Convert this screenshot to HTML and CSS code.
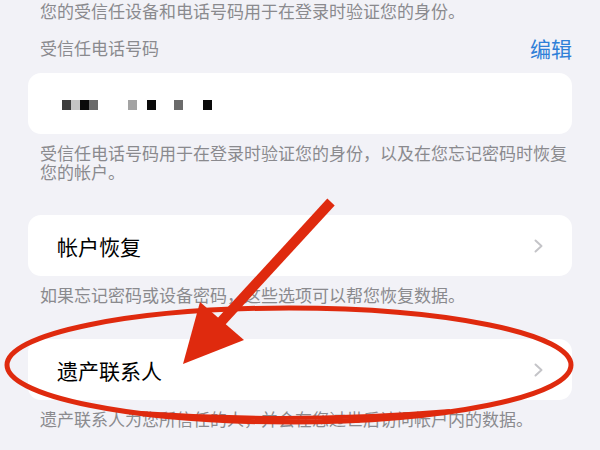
FILE: index.html
```html
<!DOCTYPE html>
<html lang="zh-CN">
<head>
<meta charset="UTF-8"/>
<meta name="viewport" content="width=device-width, initial-scale=1.0"/>
<title>密码与安全性</title>
<link rel="stylesheet" href="styles.css">
</head>
<body>

<div class="page">
  <p class="note">您的受信任设备和电话号码用于在登录时验证您的身份。</p>

  <div class="group-head">
    <span class="group-title">受信任电话号码</span>
    <a class="edit-link" href="#">编辑</a>
  </div>

  <!-- masked phone number -->
  <div class="card phone">
    <span class="px t-dark"></span><span class="px t-light"></span><span class="px t-black"></span><span class="px t-mid"></span>
    <span class="px t-soft gap-30"></span>
    <span class="px t-black gap-10"></span>
    <span class="px t-mid gap-18"></span>
    <span class="px t-black gap-20"></span>
  </div>
  <p class="note foot">受信任电话号码用于在登录时验证您的身份，以及在您忘记密码时恢复您的帐户。</p>

  <a class="card row" href="#">
    <span class="row-label">帐户恢复</span>
    <svg class="chevron" width="9" height="14" viewBox="0 0 9 14"><polyline points="1.5,1.5 7.5,7 1.5,12.5" fill="none" stroke="#c4c4c8" stroke-width="2" stroke-linecap="round" stroke-linejoin="round"/></svg>
  </a>
  <p class="note foot">如果忘记密码或设备密码，这些选项可以帮您恢复数据。</p>

  <a class="card row" href="#">
    <span class="row-label">遗产联系人</span>
    <svg class="chevron" width="9" height="14" viewBox="0 0 9 14"><polyline points="1.5,1.5 7.5,7 1.5,12.5" fill="none" stroke="#c4c4c8" stroke-width="2" stroke-linecap="round" stroke-linejoin="round"/></svg>
  </a>
  <p class="note foot">遗产联系人为您所信任的人，并会在您过世后访问帐户内的数据。</p>
</div>

<!-- red markup drawn over the screenshot -->
<svg class="markup" width="600" height="450" viewBox="0 0 600 450">
  <ellipse cx="289" cy="365" rx="282" ry="57" fill="none" stroke="#df2a0e" stroke-width="5"/>
  <path d="M140 413 Q295 424 450 411" fill="none" stroke="#df2a0e" stroke-width="4"/>
  <line x1="331" y1="202" x2="220" y2="323" stroke="#df2a0e" stroke-width="10"/>
  <polygon points="200,302 244,340 183,364" fill="#df2a0e"/>
</svg>

</body>
</html>
```

FILE: styles.css
```css
*{box-sizing:border-box;margin:0;padding:0;}
body{font-family:"Noto Sans CJK SC","Noto Sans",sans-serif;background:#f2f2f7;width:600px;height:450px;overflow:hidden;position:relative;}
.page{padding:1px 28px 0;}
.note{font-size:17px;line-height:19px;color:#8a8a8e;padding-left:12px;}
.note.foot{margin-top:9px;}
.group-head{display:flex;justify-content:space-between;align-items:center;margin-top:16px;padding-left:12px;}
.group-title{font-size:17px;line-height:20px;color:#8a8a8e;}
.edit-link{font-size:21px;line-height:24px;color:#2f7fd8;text-decoration:none;}
.card{display:flex;align-items:center;height:61px;background:#fff;border-radius:13px;}
.phone{margin-top:13px;padding-left:34px;padding-top:3px;}
.row{justify-content:space-between;padding:0 29px;text-decoration:none;margin-top:34px;}
.row + .note + .row{margin-top:35px;}
.row-label{font-size:21px;line-height:24px;color:#000;}
.chevron{display:block;}
.px{display:block;width:9px;height:10px;}
.t-dark{background:#3d3d3d;}
.t-light{background:#c5c5c5;}
.t-black{background:#0a0a0a;}
.t-mid{background:#6b6b6b;}
.t-soft{background:#a3a3a3;}
.gap-30{margin-left:30px;}
.gap-10{margin-left:10px;}
.gap-18{margin-left:18px;}
.gap-20{margin-left:20px;}
.markup{position:absolute;top:0;left:0;pointer-events:none;}
```
